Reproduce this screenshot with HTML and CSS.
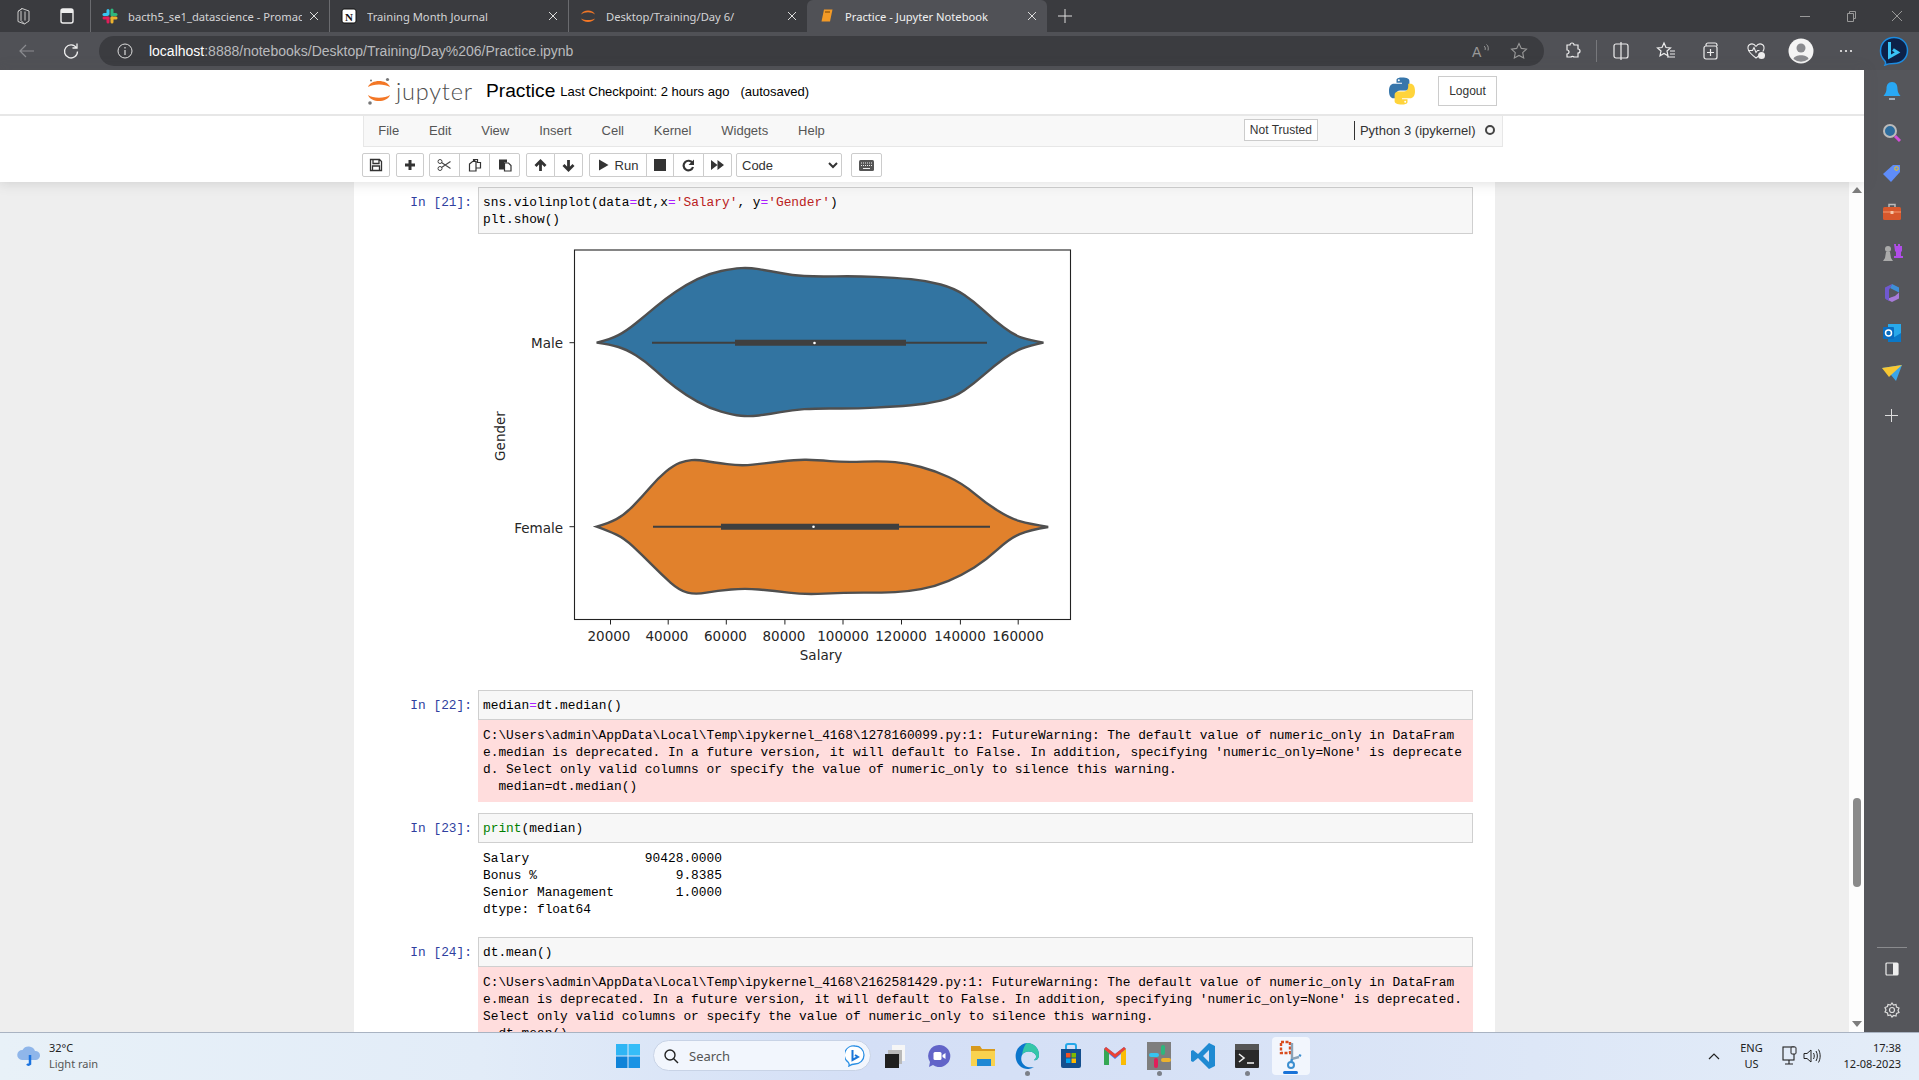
FILE: index.html
```html
<!DOCTYPE html>
<html>
<head>
    <title>Practice - Jupyter Notebook</title>
    <meta charset="UTF-8">
    <link rel="stylesheet" href="styles.css">
</head>
<body>
    <!-- browser tabs -->
    <div class="tabstrip">
        <div class="strip-icons">
            <svg class="ico" width="20" height="20" viewBox="0 0 20 20"><path d="M8 2.500l7 2.500v10l-4.500 3-6.500-2.500v-10zM8 2.500l-4 3M7 5v9.500l3.500 3.500M11 5.500v9" fill="none" stroke="#ccc" stroke-width="1"/></svg>
            <svg class="ico" width="20" height="20" viewBox="0 0 20 20"><rect x="4" y="3" width="12" height="14" rx="2" fill="none" stroke="#eee" stroke-width="1.400"/><rect x="4" y="3" width="12" height="4" fill="#eee"/></svg>
        </div>
        <div class="tab">
            <svg class="tab-ico" width="16" height="16" viewBox="0 0 16 16"><g fill="none" stroke-width="3" stroke-linecap="round"><path d="M6 2.500v3.500" stroke="#36c5f0"/><path d="M2 6.500h3" stroke="#36c5f0"/><path d="M10 2v5" stroke="#2eb67d"/><path d="M11 6.500h3" stroke="#2eb67d"/><path d="M10 10v4" stroke="#ecb22e"/><path d="M10 10h4" stroke="#ecb22e"/><path d="M6 10v4" stroke="#e01e5a"/><path d="M2 10h4" stroke="#e01e5a"/></g></svg>
            <span class="tab-title">bacth5_se1_datascience - Promact</span>
            <svg class="tab-x" width="10" height="10" viewBox="0 0 10 10"><path d="M1 1l8 8M9 1l-8 8"/></svg>
        </div>
        <div class="tab">
            <svg class="tab-ico" width="16" height="16" viewBox="0 0 16 16"><rect x="1" y="1" width="14" height="14" rx="2" fill="#fff" stroke="#111"/><text x="8" y="12.500" class="notion-n">N</text></svg>
            <span class="tab-title">Training Month Journal</span>
            <svg class="tab-x" width="10" height="10" viewBox="0 0 10 10"><path d="M1 1l8 8M9 1l-8 8"/></svg>
        </div>
        <div class="tab">
            <svg class="tab-ico" width="16" height="16" viewBox="0 0 16 16"><path d="M1 6.500C3 1 13 1 15 6.500 11 3.500 5 3.500 1 6.500zM1 10.500C3 15 13 15 15 10.500 11 12.500 5 12.500 1 10.500z" fill="#f37726"/></svg>
            <span class="tab-title">Desktop/Training/Day 6/</span>
            <svg class="tab-x" width="10" height="10" viewBox="0 0 10 10"><path d="M1 1l8 8M9 1l-8 8"/></svg>
        </div>
        <div class="tab active">
            <svg class="tab-ico" width="16" height="16" viewBox="0 0 16 16"><path d="M5 1.500h8.500l-2.500 12H2.500z" fill="#f39a26"/><path d="M6 4h5" stroke="#7a4400"/></svg>
            <span class="tab-title">Practice - Jupyter Notebook</span>
            <svg class="tab-x" width="10" height="10" viewBox="0 0 10 10"><path d="M1 1l8 8M9 1l-8 8"/></svg>
        </div>
        <svg class="new-tab" width="14" height="14" viewBox="0 0 14 14"><path d="M7 0v14M0 7h14" stroke="#ddd"/></svg>
        <div class="winctl">
            <svg width="12" height="12" viewBox="0 0 12 12"><path d="M1 6.500h10" stroke="#999"/></svg>
            <svg width="12" height="12" viewBox="0 0 12 12"><path d="M2.500 3.500h6v8h-6zM4.500 3.500v-2h6v7h-2" fill="none" stroke="#999"/></svg>
            <svg width="12" height="12" viewBox="0 0 12 12"><path d="M1 1l10 10M11 1l-10 10" stroke="#999"/></svg>
        </div>
    </div>

    <!-- address bar -->
    <div class="addrbar">
        <div class="nav-btn"><svg width="18" height="18" viewBox="0 0 18 18"><path d="M16 9H2M8 3L2 9l6 6" fill="none" stroke="#8b8c90" stroke-width="1.200"/></svg></div>
        <div class="nav-btn"><svg width="18" height="18" viewBox="0 0 18 18"><path d="M14.500 6A6.500 6.500 0 1 0 15.500 9.500M15 1.500V6h-4.500" fill="none" stroke="#eee" stroke-width="1.300"/></svg></div>
        <div class="addr-pill">
            <svg width="16" height="16" viewBox="0 0 16 16"><circle cx="8" cy="8" r="7" fill="none" stroke="#ddd"/><path d="M8 7v5M8 4v1.500" stroke="#ddd" stroke-width="1.200"/></svg>
            <span class="url"><b>localhost</b>:8888/notebooks/Desktop/Training/Day%206/Practice.ipynb</span>
            <svg class="addr-right" width="20" height="18" viewBox="0 0 20 18"><text x="1" y="15" class="read-a">A</text><path d="M13 4c1.500 1 1.500 3 1 4M15.500 2.500c2 1.500 2 4 1.500 6" fill="none" stroke="#999"/></svg>
            <svg class="addr-star" width="18" height="18" viewBox="0 0 18 18"><path d="M9 1.500l2.300 4.900 5.200.7-3.800 3.600 1 5.300L9 13.400 4.300 16l1-5.300L1.500 7.100l5.200-.7z" fill="none" stroke="#999" stroke-width="1.100"/></svg>
        </div>
        <div class="tool-btn"><svg width="20" height="20" viewBox="0 0 20 20"><path d="M7 4a2 2 0 0 1 4 0h4v4a2 2 0 0 1 0 4v4h-4a2 2 0 0 0-3 0H4v-3a2 2 0 0 0 0-4V4z" fill="none" stroke="#eee" stroke-width="1.200"/></svg></div>
        <div class="tool-sep"></div>
        <div class="tool-btn"><svg width="20" height="20" viewBox="0 0 20 20"><rect x="3" y="3" width="14" height="14" rx="2" fill="none" stroke="#eee" stroke-width="1.200"/><path d="M10 1v18" stroke="#eee" stroke-width="1.200"/></svg></div>
        <div class="tool-btn"><svg width="20" height="20" viewBox="0 0 20 20"><path d="M8 2l2 4.500 4.500.5-3.500 3 1 4.700L8 12.400 4 14.700l1-4.700-3.500-3L6 6.500zM14 10h5M14 13h5M11 16h8" fill="none" stroke="#eee" stroke-width="1.200"/></svg></div>
        <div class="tool-btn"><svg width="20" height="20" viewBox="0 0 20 20"><path d="M5 4.500V4a2 2 0 0 1 2-2h7a2 2 0 0 1 2 2v1M3 7a2 2 0 0 1 2-2h9a2 2 0 0 1 2 2v9a2 2 0 0 1-2 2H5a2 2 0 0 1-2-2zM9.500 8v7M6 11.500h7" fill="none" stroke="#eee" stroke-width="1.200"/></svg></div>
        <div class="tool-btn"><svg width="20" height="20" viewBox="0 0 20 20"><path d="M10 5.500C7 1 1.500 3 2 7.500c.3 3 4 6.500 8 9.500 1-.7 1.800-1.400 2.600-2M10 5.500C13 1 18.500 3 18 7.500c-.1 1-.5 2-1.200 3M2 9.500h4.500l1.500-3 2 5 1.500-2h2" fill="none" stroke="#eee" stroke-width="1.100"/><circle cx="15.500" cy="14.500" r="3.500" fill="#eee"/></svg></div>
        <div class="tool-btn"><svg width="26" height="26" viewBox="0 0 26 26"><circle cx="13" cy="13" r="12.500" fill="#f4f4f4"/><circle cx="13" cy="10" r="4.500" fill="#8a8b8f"/><path d="M5.500 21c1-5 14-5 15 0a12 12 0 0 1-15 0z" fill="#8a8b8f"/></svg></div>
        <div class="tool-btn"><svg width="16" height="6" viewBox="0 0 16 6"><circle cx="3" cy="3" r="1.100" fill="#eee"/><circle cx="8" cy="3" r="1.100" fill="#eee"/><circle cx="13" cy="3" r="1.100" fill="#eee"/></svg></div>
        <div class="bing-btn"><svg width="30" height="30" viewBox="0 0 30 30"><path d="M15 1.500c8 0 13.500 5.500 13.500 13 0 7.500-5.500 13-13.500 13-3 0-6 0-9 1.500 1-2 .5-3.500-.5-4.500C3 22 1.500 19 1.500 15 1.500 7 7 1.500 15 1.500z" fill="#0d2148" stroke="#1c8be0" stroke-width="1.500"/><path d="M10.500 6v15l8-4.500-4.500-3" fill="none" stroke="#39c3f5" stroke-width="3"/></svg></div>
    </div>

    <div class="workarea">
        <div class="page">
            <div class="nb-header">
                <div class="header-row">
                    <svg class="jp-mark" width="26" height="28" viewBox="0 0 26 28"><path d="M2 10C5 2 21 2 24 10 19 6.500 7 6.500 2 10zM2 18C5 26 21 26 24 18 19 21.500 7 21.500 2 18z" fill="#f37726"/><circle cx="21.500" cy="2.500" r="1.600" fill="#767677"/><circle cx="5" cy="3.500" r="1" fill="#767677"/><circle cx="4" cy="26" r="1.800" fill="#767677"/></svg>
                    <span class="jp-word">jupyter</span>
                    <span class="nb-name">Practice</span>
                    <span class="checkpoint">Last Checkpoint: 2 hours ago</span>
                    <span class="autosave">(autosaved)</span>
                    <svg class="py-logo" width="28" height="28" viewBox="0 0 28 28"><path d="M13.800.5C8.200.5 8.500 3 8.500 3v2.800H14v.9H6C3 6.700 1 9 1 14s2 7.300 4.500 7.300h2.300V18c0-2.500 2-4.500 4.400-4.500h5.600c2 0 3.600-1.500 3.600-3.500V4c0-2-2-3.500-7.600-3.500z" fill="#3776ab"/><path d="M14.200 27.500c5.600 0 5.300-2.500 5.300-2.500v-2.800H14v-.9h8c3 0 5-2.300 5-7.300s-2-7.300-4.500-7.300h-2.300V10c0 2.500-2 4.500-4.400 4.500h-5.600c-2 0-3.600 1.500-3.600 3.500v6c0 2 2 3.500 7.600 3.500z" fill="#ffd43b"/><circle cx="10.800" cy="3.300" r="1" fill="#fff"/><circle cx="17.200" cy="24.700" r="1" fill="#fff"/></svg>
                    <div class="logout">Logout</div>
                </div>
                <div class="menubar">
                    <span class="menu-item">File</span>
                    <span class="menu-item">Edit</span>
                    <span class="menu-item">View</span>
                    <span class="menu-item">Insert</span>
                    <span class="menu-item">Cell</span>
                    <span class="menu-item">Kernel</span>
                    <span class="menu-item">Widgets</span>
                    <span class="menu-item">Help</span>
                    <span class="not-trusted">Not Trusted</span>
                    <span class="kernel-name">Python 3 (ipykernel)</span>
                    <span class="kernel-dot"></span>
                </div>
                <div class="toolbar">
                    <div class="btn w28"><svg width="14" height="14" viewBox="0 0 14 14"><path d="M1.500 1.500h9l2 2v9h-11zM4 1.500v4h6v-4M3.500 12.500V8h7v4.500" fill="none" stroke="#333" stroke-width="1.300"/></svg></div>
                    <div class="btn w28 gap-s"><svg width="14" height="14" viewBox="0 0 14 14"><path d="M7 2v10M2 7h10" stroke="#333" stroke-width="3"/></svg></div>
                    <div class="btn-group gap-xs">
                        <div class="btn w30"><svg width="15" height="14" viewBox="0 0 15 14"><circle cx="3" cy="3.500" r="2" fill="none" stroke="#444"/><circle cx="3" cy="10.500" r="2" fill="none" stroke="#444"/><path d="M4.500 4.500l9 6M4.500 9.500l9-6" stroke="#444" stroke-width="1.100"/></svg></div>
                        <div class="btn w30"><svg width="14" height="14" viewBox="0 0 14 14"><path d="M5.500 3.500V1.500h4v3h3V10h-4M8.500 4.500L5.500 1.500M1.500 6l3-2.500h3.500V13h-6.500z" fill="none" stroke="#333" stroke-width="1.200"/></svg></div>
                        <div class="btn w30"><svg width="14" height="14" viewBox="0 0 14 14"><path d="M1 1.500h8v3H6v7H1z" fill="#333"/><path d="M6.500 5h4l2.500 2.500V13H6.500z" fill="none" stroke="#333" stroke-width="1.200"/></svg></div>
                    </div>
                    <div class="btn-group gap-s">
                        <div class="btn w29"><svg width="13" height="13" viewBox="0 0 13 13"><path d="M6.500 12V2M1.500 7l5-5 5 5" fill="none" stroke="#333" stroke-width="2.800"/></svg></div>
                        <div class="btn w29"><svg width="13" height="13" viewBox="0 0 13 13"><path d="M6.500 1v10M1.500 6l5 5 5-5" fill="none" stroke="#333" stroke-width="2.800"/></svg></div>
                    </div>
                    <div class="btn-group gap-s">
                        <div class="btn run"><svg width="11" height="12" viewBox="0 0 11 12"><path d="M1 .5L10.500 6 1 11.500z" fill="#333"/></svg><span>Run</span></div>
                        <div class="btn w28"><svg width="12" height="12" viewBox="0 0 12 12"><rect width="12" height="12" fill="#333"/></svg></div>
                        <div class="btn w30"><svg width="13" height="13" viewBox="0 0 13 13"><path d="M10.500 4A4.800 4.800 0 1 0 11 8" fill="none" stroke="#333" stroke-width="2.200"/><path d="M12 .5V6H6.500z" fill="#333"/></svg></div>
                        <div class="btn w29"><svg width="13" height="12" viewBox="0 0 13 12"><path d="M0 1l6.500 5L0 11zM6.500 1L13 6l-6.500 5z" fill="#333"/></svg></div>
                    </div>
                    <select class="cell-type"><option>Code</option></select>
                    <div class="btn kb"><svg width="15" height="11" viewBox="0 0 15 11"><rect width="15" height="11" rx="1.500" fill="#555"/><path d="M2 3h11M2 5.500h11" stroke="#eee" stroke-dasharray="1 1"/><path d="M4 8.500h7" stroke="#eee"/></svg></div>
                </div>
            </div>

            <div class="nb-body">
                <div class="site">
                    <div class="notebook">
                        <div class="cell">
                            <div class="prompt">In&nbsp;[21]:</div>
                            <div class="cell-main">
<pre class="input">sns.violinplot(data<span class="op">=</span>dt,x<span class="op">=</span><span class="str">'Salary'</span>, y<span class="op">=</span><span class="str">'Gender'</span>)
plt.show()</pre>
                                <svg class="plot" width="620" height="436" viewBox="0 4 620 436">
                                    <g transform="scale(.3954 .3333)">
                                        <path class="violin" fill="#3274a1" d="M295 338Q330 328 350 315.500Q370 303 395 279Q420 255 445 230Q470 205 495 185Q520 165 550 147.500Q580 130 610 123Q640 116 660 114.500Q680 113 705 117.500Q730 122 760 129Q790 136 820 138Q850 140 900 139Q950 138 1000 140.500Q1050 143 1090 147.500Q1130 152 1165 163.500Q1200 175 1225 195Q1250 215 1275 242.500Q1300 270 1325 292.500Q1350 315 1370 323Q1390 331 1425 338Q1390 347 1370 356Q1350 365 1325 386.500Q1300 408 1275 434Q1250 460 1225 481Q1200 502 1165 512Q1130 522 1090 526Q1050 530 1000 533Q950 536 900 535.500Q850 535 820 537.500Q790 540 760 546.500Q730 553 705 556.500Q680 560 660 557.500Q640 555 610 545Q580 535 550 515Q520 495 495 472.500Q470 450 445 422.500Q420 395 395 376.500Q370 358 350 351Q330 344 295 338Z"/>
                                        <path class="violin" fill="#e1812c" d="M295 890Q325 880 345 867.500Q365 855 387.500 827.500Q410 800 430 772.500Q450 745 470 725Q490 705 505 698.500Q520 692 535 690.500Q550 689 570 693Q590 697 625 702.500Q660 708 690 704Q720 700 760 694.500Q800 689 825 689.500Q850 690 885 693.500Q920 697 970 695Q1020 693 1050 696.500Q1080 700 1115 711Q1150 722 1185 741Q1220 760 1250 790Q1280 820 1310 842.500Q1340 865 1365 873.500Q1390 882 1437 891Q1390 900 1365 912.500Q1340 925 1310 957.500Q1280 990 1250 1012.500Q1220 1035 1185 1052.500Q1150 1070 1115 1077.500Q1080 1085 1050 1086.500Q1020 1088 970 1088Q920 1088 870 1091Q820 1094 780 1088Q740 1082 705 1078.500Q670 1075 635 1078.500Q600 1082 572.500 1088Q545 1094 525 1088Q505 1082 482.500 1058.500Q460 1035 435 1005Q410 975 387.500 950Q365 925 345 914Q325 903 295 890Z"/>
                                    </g>
                                    <path class="whisker" d="M172 112.700H507M173 296.700H510"/>
                                    <path class="box" d="M255 112.700H426M241 296.700H419"/>
                                    <circle class="median" cx="334.500" cy="113" r="1.300"/>
                                    <circle class="median" cx="333.500" cy="296.700" r="1.300"/>
                                    <rect class="frame" x="94.500" y="20" width="496" height="369.500"/>
                                    <path class="tick" d="M130.500 389.500v5M188.200 389.500v5M246.300 389.500v5M304.900 389.500v5M363 389.500v5M421.500 389.500v5M480.400 389.500v5M538.200 389.500v5M94.500 112.700h-5M94.500 296.700h-5"/>
                                    <text class="lbl mid" x="129" y="410.500">20000</text>
                                    <text class="lbl mid" x="187" y="410.500">40000</text>
                                    <text class="lbl mid" x="245.500" y="410.500">60000</text>
                                    <text class="lbl mid" x="304" y="410.500">80000</text>
                                    <text class="lbl mid" x="363" y="410.500">100000</text>
                                    <text class="lbl mid" x="421" y="410.500">120000</text>
                                    <text class="lbl mid" x="480" y="410.500">140000</text>
                                    <text class="lbl mid" x="538" y="410.500">160000</text>
                                    <text class="lbl mid" x="341" y="430">Salary</text>
                                    <text class="lbl end" x="83" y="118">Male</text>
                                    <text class="lbl end" x="83" y="303">Female</text>
                                    <text class="lbl mid" transform="translate(25 206) rotate(-90)">Gender</text>
                                </svg>
                            </div>
                        </div>

                        <div class="cell">
                            <div class="prompt">In&nbsp;[22]:</div>
                            <div class="cell-main">
                                <pre class="input">median<span class="op">=</span>dt.median()</pre>
<pre class="stderr">C:\Users\admin\AppData\Local\Temp\ipykernel_4168\1278160099.py:1: FutureWarning: The default value of numeric_only in DataFram
e.median is deprecated. In a future version, it will default to False. In addition, specifying 'numeric_only=None' is deprecate
d. Select only valid columns or specify the value of numeric_only to silence this warning.
  median=dt.median()</pre>
                            </div>
                        </div>

                        <div class="cell">
                            <div class="prompt">In&nbsp;[23]:</div>
                            <div class="cell-main">
                                <pre class="input"><span class="kw">print</span>(median)</pre>
<pre class="stdout">Salary               90428.0000
Bonus %                  9.8385
Senior Management        1.0000
dtype: float64</pre>
                            </div>
                        </div>

                        <div class="cell">
                            <div class="prompt">In&nbsp;[24]:</div>
                            <div class="cell-main">
                                <pre class="input">dt.mean()</pre>
<pre class="stderr">C:\Users\admin\AppData\Local\Temp\ipykernel_4168\2162581429.py:1: FutureWarning: The default value of numeric_only in DataFram
e.mean is deprecated. In a future version, it will default to False. In addition, specifying 'numeric_only=None' is deprecated.
Select only valid columns or specify the value of numeric_only to silence this warning.
  dt.mean()</pre>
                            </div>
                        </div>
                    </div>
                </div>
                <div class="scrollbar">
                    <div class="arrow-up"></div>
                    <div class="thumb"></div>
                    <div class="arrow-down"></div>
                </div>
            </div>
        </div>

        <!-- edge sidebar -->
        <div class="sidebar">
            <svg width="20" height="22" viewBox="0 0 20 22"><path d="M10 1c4 0 5.500 3 5.500 7 0 3 1.500 5 3 7H1.500c1.500-2 3-4 3-7 0-4 1.500-7 5.500-7z" fill="#29a8f4"/><path d="M7 18h6" stroke="#bcd" stroke-width="1.500"/></svg>
            <svg width="20" height="20" viewBox="0 0 20 20"><circle cx="8" cy="8" r="6" fill="#2d6d9e" stroke="#bbb" stroke-width="2"/><path d="M13 13l5 5" stroke="#d34fd8" stroke-width="3"/></svg>
            <svg width="20" height="20" viewBox="0 0 20 20"><path d="M1 11L11 2h7v7l-9 10z" fill="#5f8dfa"/><circle cx="14.500" cy="5.500" r="1.800" fill="#5f8dfa" stroke="#fc0"/></svg>
            <svg width="20" height="18" viewBox="0 0 20 18"><path d="M7 4V1.500h6V4" fill="none" stroke="#bbb" stroke-width="1.500"/><rect x="1" y="4" width="18" height="13" rx="1.500" fill="#d8582c"/><path d="M1 9h18" stroke="#f29a70"/><rect x="8.500" y="8" width="3" height="3" fill="#f6c7a8"/></svg>
            <svg width="22" height="22" viewBox="0 0 22 22"><path d="M13 3h2v2h2V3h2v2h2v-2v7l-1 1v4h2v2h-9v-2h2v-4l-1-1z" fill="#b04de8"/><circle cx="7" cy="8" r="3" fill="#aaa"/><path d="M5 11h4l1 6 2 3H2l2-3z" fill="#aaa"/></svg>
            <svg width="20" height="20" viewBox="0 0 20 20"><path d="M10 1l7 3.500v5L8 5z" fill="#3e8ed8"/><path d="M17 9.500v6L10 19l-6-3 9-3z" fill="#a77ad8"/><path d="M10 1L3 4.500v11L7 18V7z" fill="#6f58d0"/><path d="M7 7l7 4-7 4z" fill="#55565b"/></svg>
            <svg width="20" height="20" viewBox="0 0 20 20"><rect x="6" y="1" width="13" height="18" fill="#28a8ea"/><path d="M6 11l6.500 3L19 10v9H6z" fill="#0a78c8"/><rect x="1" y="4" width="11" height="12" rx="1" fill="#0a6cc0"/><circle cx="6.500" cy="10" r="3" fill="none" stroke="#fff" stroke-width="1.500"/></svg>
            <svg class="side-send" width="20" height="16" viewBox="0 0 20 16"><path d="M0 3l20-3-6 16-5-6z" fill="#3ba5e8"/><path d="M0 3l20-3-11 10-2 2z" fill="#f7c733"/></svg>
            <svg class="side-plus" width="13" height="13" viewBox="0 0 13 13"><path d="M6.500 0v13M0 6.500h13" stroke="#ddd"/></svg>
            <div class="side-rule"></div>
            <svg class="side-panel" width="16" height="16" viewBox="0 0 16 16"><rect x="2" y="2" width="12" height="12" rx="1" fill="none" stroke="#eee" stroke-width="1.200"/><rect x="9" y="2" width="5" height="12" fill="#eee"/></svg>
            <svg class="side-gear" width="18" height="18" viewBox="0 0 18 18"><circle cx="9" cy="9" r="2.500" fill="none" stroke="#ddd" stroke-width="1.200"/><path d="M9 2l1.500 2 2.500-.5.500 2.500 2.500 1-1 2.500 1 2-2.500 1-.5 2.500-2.500-.5L9 16l-1.500-2-2.500.5-.5-2.500-2.500-1 1-2-1-2.500 2.500-1L5 3.500l2.500.5z" fill="none" stroke="#ddd" stroke-width="1.200"/></svg>
        </div>
    </div>

    <!-- windows taskbar -->
    <div class="taskbar">
        <div class="weather">
            <svg width="26" height="26" viewBox="0 0 26 26"><path d="M6 17a5 5 0 0 1 .5-10A7 7 0 0 1 19 8a4.500 4.500 0 0 1 1 9z" fill="#8fb6ea"/><path d="M14 12v9a2 2 0 0 1-3 0" fill="none" stroke="#1a73e0" stroke-width="2.500"/></svg>
            <div class="weather-text">
                <span>32°C</span>
                <span class="weather-sub">Light rain</span>
            </div>
        </div>
        <div class="task-btn start"><svg width="24" height="24" viewBox="0 0 24 24"><path d="M0 0h11.500v11.500H0z" fill="#2fb5f4"/><path d="M12.500 0H24v11.500H12.500z" fill="#36bdf8"/><path d="M0 12.500h11.500V24H0z" fill="#0f83d8"/><path d="M12.500 12.500H24V24H12.500z" fill="#1a93e4"/></svg></div>
        <div class="search-pill">
            <svg width="16" height="16" viewBox="0 0 16 16"><circle cx="7" cy="7" r="5" fill="none" stroke="#222" stroke-width="1.400"/><path d="M10.500 10.500L15 15" stroke="#222" stroke-width="1.400"/></svg>
            <span class="search-text">Search</span>
            <svg class="search-bing" width="20" height="22" viewBox="0 0 20 22"><path d="M10 1c5 0 9 4 9 9s-4 9-9 9c-2 0-4 .5-6 2 .5-2 0-3-1-4a9 9 0 0 1 7-16z" fill="#fff" stroke="#2a8fe4" stroke-width="1.300"/><path d="M7.500 5v10l5.500-3-3-2" fill="none" stroke="#1b76d8" stroke-width="2"/></svg>
        </div>
        <div class="task-btn"><svg width="24" height="24" viewBox="0 0 24 24"><rect x="9" y="1" width="13" height="16" fill="#f6f6f6"/><rect x="5" y="6" width="14" height="14" fill="#b9b9b9"/><rect x="2" y="10" width="14" height="14" fill="#1f1f1f"/></svg></div>
        <div class="task-btn"><svg width="24" height="24" viewBox="0 0 24 24"><path d="M12 1a11 11 0 1 1-6 20l-4 2 1-5A11 11 0 0 1 12 1z" fill="#6264c8"/><rect x="6.500" y="8" width="8" height="8" rx="1.500" fill="#fff"/><path d="M15.500 11l3-2v6l-3-2z" fill="#fff"/></svg></div>
        <div class="task-btn"><svg width="24" height="24" viewBox="0 0 24 24"><path d="M0 2h9l2 3h13v4H0z" fill="#d89a1e"/><path d="M0 7h24v15H0z" fill="#f9d24e"/><rect x="6" y="15" width="14" height="7" fill="#1e88d4"/></svg></div>
        <div class="task-btn dot"><svg width="26" height="28" viewBox="0 0 26 28"><path d="M13 1a12 13 0 1 0 7 24C11 27 5 20 8 13c2-4 9-5 13-1 2 2 1 5-1 6 3 1 5-2 5-5C25 6 20 1 13 1z" fill="#0c76cc"/><path d="M13 1C20 1 25 6 25 13c0 3-2 6-5 5 2-1 3-4 1-6-4-4-11-3-13 1 1-6 3-11 5-12z" fill="#35c7a8"/></svg></div>
        <div class="task-btn"><svg width="24" height="26" viewBox="0 0 24 26"><path d="M7 6V3a2 2 0 0 1 2-2h6a2 2 0 0 1 2 2v3" fill="none" stroke="#25a7e8" stroke-width="2"/><path d="M2 6h20v17a2 2 0 0 1-2 2H4a2 2 0 0 1-2-2z" fill="#144f8e"/><rect x="7" y="10" width="4.500" height="4.500" fill="#f25022"/><rect x="12.500" y="10" width="4.500" height="4.500" fill="#7fba00"/><rect x="7" y="15.500" width="4.500" height="4.500" fill="#00a4ef"/><rect x="12.500" y="15.500" width="4.500" height="4.500" fill="#ffb900"/></svg></div>
        <div class="task-btn"><svg width="24" height="20" viewBox="0 0 24 20"><path d="M1 3v16h5V8l6 5 6-5v11h5V3l-2-2-9 7-9-7z" fill="#4285f4"/><path d="M1 3l5 4v12H2a1 1 0 0 1-1-1z" fill="#34a853"/><path d="M3 1l9 7 9-7 2 2-11 9L1 3z" fill="#ea4335"/><path d="M18 7l5-4v15a1 1 0 0 1-1 1h-4z" fill="#fbbc04"/></svg></div>
        <div class="task-btn dot"><svg width="24" height="28" viewBox="0 0 24 28"><rect width="24" height="28" fill="#7e7e7e"/><rect x="2" y="11" width="10" height="4" rx="2" fill="#36c5f0"/><rect x="14" y="3" width="4" height="10" rx="2" fill="#2eb67d"/><rect x="14" y="16" width="10" height="4" rx="2" fill="#ecb22e"/><rect x="7" y="16" width="4" height="10" rx="2" fill="#e01e5a"/></svg></div>
        <div class="task-btn"><svg width="26" height="28" viewBox="0 0 26 28"><path d="M19 1l6 3v20l-6 3L8 16l-5 4-2-1V9l2-1 5 4zM19 8l-6 6 6 6z" fill="#1f8ad2" fill-rule="evenodd"/></svg></div>
        <div class="task-btn dot"><svg width="24" height="24" viewBox="0 0 24 24"><rect width="24" height="24" rx="1" fill="#2a2a2a"/><rect width="24" height="6" fill="#555"/><path d="M4 10l5 4-5 4" fill="none" stroke="#eee" stroke-width="1.600"/><path d="M12 19h7" stroke="#eee" stroke-width="1.600"/></svg></div>
        <div class="task-btn active-app"><svg width="26" height="32" viewBox="0 0 26 32"><path d="M3 2h9v11H3z" fill="none" stroke="#d94d1f" stroke-width="2.400" stroke-dasharray="3 1.500"/><path d="M14 3v16l7-2" fill="none" stroke="#8ba3b8" stroke-width="2.400"/><circle cx="13" cy="25" r="3" fill="none" stroke="#3d8fd0" stroke-width="2"/><path d="M14 19l-1 4M21 15l2 1" stroke="#3d8fd0" stroke-width="2.400"/></svg></div>
        <div class="tray">
            <svg class="tray-up" width="12" height="8" viewBox="0 0 12 8"><path d="M1 7l5-5 5 5" fill="none" stroke="#222" stroke-width="1.200"/></svg>
            <div class="tray-lang"><span>ENG</span><span>US</span></div>
            <svg width="18" height="20" viewBox="0 0 18 20"><rect x="1" y="1" width="11" height="13" fill="none" stroke="#222" stroke-width="1.100"/><rect x="9" y="1" width="5" height="7" rx="1" fill="#e7effa" stroke="#222"/><path d="M3 18h8M7 14v4" stroke="#222" stroke-width="1.100"/></svg>
            <svg class="tray-vol" width="18" height="18" viewBox="0 0 18 18"><path d="M1 6.500h3L8 3v12l-4-3.500H1z" fill="none" stroke="#222"/><path d="M10.500 6c1 2 1 4 0 6M13 4c1.800 3 1.800 7 0 10M15.500 2.500c2.200 4 2.200 9 0 13" fill="none" stroke="#222"/></svg>
            <div class="clock"><span>17:38</span><span>12-08-2023</span></div>
        </div>
    </div>
</body>
</html>
```

FILE: styles.css
```css
* { box-sizing: border-box; }
html, body { margin: 0; height: 1080px; overflow: hidden; }
body { display: flex; flex-direction: column; font-family: "Liberation Sans", Arial, sans-serif; background: #eee; }
svg { flex: none; display: block; }

/* tabs */
.tabstrip { height: 32px; background: #3a3b3f; display: flex; align-items: center; flex: none; }
.strip-icons { width: 90px; height: 32px; display: flex; align-items: center; gap: 23px; padding-left: 14px; }
.tab { width: 239px; height: 32px; display: flex; align-items: center; padding: 0 10px 0 11px; color: #d4d4d6; font: 11.200px "Noto Sans", sans-serif; border-left: 1px solid #6a6b6f; }
.tab-ico { margin: 0 10px 0 0; }
.notion-n { font: bold 11px "Liberation Serif", serif; text-anchor: middle; fill: #111; }
.tab-title { flex: 1; overflow: hidden; white-space: nowrap; }
.tab-x { stroke: #ddd; fill: none; margin-left: 7px; }
.tab.active { width: 240px; background: #505156; color: #f1f1f1; border-left: 0; border-radius: 6px 6px 0 0; padding-left: 12px; }
.new-tab { margin-left: 11px; }
.winctl { margin-left: auto; display: flex; gap: 34px; padding-right: 16px; }

/* address bar */
.addrbar { height: 38px; background: #505156; display: flex; align-items: center; padding-left: 5px; flex: none; }
.nav-btn { width: 44px; display: flex; justify-content: center; }
.addr-pill { width: 1446px; height: 30px; margin: 0 6px; background: #3b3c40; border-radius: 15px; display: flex; align-items: center; padding-left: 18px; }
.url { color: #b9babd; font: 14px "Liberation Sans", sans-serif; margin-left: 16px; }
.url b { color: #fff; font-weight: normal; }
.read-a { font: 14px "Liberation Sans", sans-serif; fill: #999; }
.addr-right { margin-left: auto; }
.addr-star { margin: 0 16px 0 19px; }
.tool-btn { width: 45px; display: flex; justify-content: center; }
.tool-sep { width: 1px; height: 22px; margin: 0 1px; background: #77787c; }
.bing-btn { width: 50px; margin-left: 1px; display: flex; justify-content: center; }

.workarea { flex: 1; display: flex; min-height: 0; }
.page { flex: 1; display: flex; flex-direction: column; min-width: 0; }

/* notebook header */
.nb-header { height: 112px; background: #fff; flex: none; box-shadow: 0 0 12px 1px rgba(87, 87, 87, .2); position: relative; z-index: 2; }
.header-row { height: 46px; border-bottom: 2px solid #e7e7e7; display: flex; align-items: center; padding: 0 0 2px 366px; }
.jp-word { font: 300 23.500px Lato, sans-serif; color: #4e4e4e; margin-left: 4px; letter-spacing: .8px; width: 90px; }
.nb-name { font-size: 19.200px; color: #000; margin-right: 5px; }
.checkpoint { font-size: 13px; color: #000; }
.autosave { font-size: 13px; color: #000; margin-left: 11px; }
.py-logo { margin-left: auto; }
.logout { width: 59px; height: 30px; margin: 0 367px 0 22px; border: 1px solid #ccc; font-size: 12px; color: #333; display: flex; align-items: center; justify-content: center; }

.menubar { width: 1140px; height: 31px; margin-left: 362.500px; background: #f8f8f8; border: 1px solid #e7e7e7; border-top: 0; display: flex; align-items: center; font-size: 13px; color: #555; padding: 0 7px 2px 0; }
.menu-item { padding: 0 14.700px; }
.menu-item + .menu-item { padding-left: 15.200px; }
.not-trusted { margin-left: auto; margin-right: -1px; width: 74px; height: 22px; border: 1px solid #ccc; background: #fff; font-size: 12px; color: #333; display: flex; align-items: center; justify-content: center; }
.kernel-name { margin-left: 37px; padding-left: 5px; border-left: 1px solid #333; color: #333; line-height: 19px; }
.kernel-dot { width: 10px; height: 10px; margin-left: 9px; border: 2px solid #444; border-radius: 50%; }

.toolbar { margin: 6px 0 0 362px; height: 24px; display: flex; }
.btn { height: 24px; background: #fff; border: 1px solid #ccc; border-radius: 2px; display: flex; align-items: center; justify-content: center; color: #333; font-size: 13px; }
.btn-group { display: flex; }
.btn-group .btn { border-radius: 0; margin-left: -1px; }
.btn-group .btn:first-child { margin-left: 0; border-radius: 2px 0 0 2px; }
.btn-group .btn:last-child { border-radius: 0 2px 2px 0; }
.w28 { width: 28px; }
.w29 { width: 29px; }
.w30 { width: 31px; }
.gap-s { margin-left: 6px; }
.gap-xs { margin-left: 5px; }
.run { width: 58px; gap: 6px; }
.cell-type { width: 106px; height: 24px; margin-left: 4px; background: #fff; border: 1px solid #ccc; border-radius: 2px; font: 13px "Liberation Sans", sans-serif; color: #333; padding-left: 1px; }
.kb { width: 31px; margin-left: 9px; }

/* notebook */
.nb-body { flex: 1; display: flex; min-height: 0; }
.site { flex: 1; overflow: hidden; background: #eee; padding-left: 354px; }
.notebook { width: 1141px; height: 100%; background: #fff; padding: 5px 22px 0 0; display: flex; flex-direction: column; gap: 11.500px; }
.cell { display: flex; flex: none; }
.prompt { width: 124px; padding: 7.250px 6px 0 0; text-align: right; font: 12.850px/17px "Liberation Mono", monospace; color: #303f9f; flex: none; }
.cell-main { flex: 1; min-width: 0; }
pre { margin: 0; font: 12.850px/17px "Liberation Mono", monospace; color: #000; white-space: pre; }
.input { background: #f7f7f7; border: 1px solid #cfcfcf; padding: 6.250px 4px 4.250px; }
.stderr { background: #fdd; padding: 7px 5px; overflow: hidden; }
.stdout { padding: 7.500px 5px; }
.str { color: #ba2121; }
.op { color: #aa22ff; }
.kw { color: #008000; }

/* chart */
.plot { margin: 0 0 9px 2px; }
.violin { stroke: #4f4f4f; stroke-width: 2.400; vector-effect: non-scaling-stroke; }
.whisker { stroke: #3f3f3f; stroke-width: 2; fill: none; }
.box { stroke: #3f3f3f; stroke-width: 6; fill: none; }
.median { fill: #fff; }
.frame { fill: none; stroke: #222; stroke-width: 1.100; }
.tick { stroke: #222; stroke-width: 1; fill: none; }
.lbl { font: 13.500px "DejaVu Sans", sans-serif; fill: #262626; }
.mid { text-anchor: middle; }
.end { text-anchor: end; }

/* page scrollbar */
.scrollbar { width: 15px; background: #fdfdfd; display: flex; flex-direction: column; align-items: center; padding: 5px 0; }
.arrow-up { width: 0; height: 0; border: 5px solid transparent; border-top: 0; border-bottom: 6px solid #7d7d7d; }
.arrow-down { width: 0; height: 0; border: 5px solid transparent; border-bottom: 0; border-top: 6px solid #7d7d7d; }
.thumb { width: 8px; height: 89px; margin: 605px 0 auto; background: #8a8a8a; border-radius: 4px; }

/* edge sidebar */
.sidebar { width: 55px; background: #55565b; display: flex; flex-direction: column; align-items: center; padding: 11px 0 13px; gap: 20px; flex: none; }
.side-send { margin-top: 2px; }
.side-plus { margin-top: 8px; }
.side-rule { width: 30px; height: 1px; background: #8a8b8e; margin: auto 0 -7px; }
.side-gear { margin-top: 4px; }

/* taskbar */
.taskbar { height: 48px; flex: none; display: flex; align-items: center; padding-bottom: 2px; border-top: 1px solid #a9b3c2; background: linear-gradient(90deg, #e8f1f8 0%, #e2ecf8 25%, #d4dff6 45%, #d6e1f6 60%, #e4edf8 100%); color: #222; font: 11px "Noto Sans", sans-serif; }
.weather { width: 605.500px; display: flex; align-items: center; padding-left: 16px; gap: 7px; flex: none; }
.weather-text { display: flex; flex-direction: column; line-height: 16px; }
.weather-sub { color: #555; }
.task-btn { width: 44px; height: 38px; display: flex; align-items: center; justify-content: center; position: relative; flex: none; }
.dot::after { content: ""; position: absolute; left: 20px; bottom: -1px; width: 5px; height: 5px; border-radius: 50%; background: #7c8088; }
.active-app { background: #f2f6fd; border-radius: 4px; width: 38px; margin-left: 3px; }
.active-app::after { content: ""; position: absolute; left: 11px; bottom: 1px; width: 15px; height: 3px; border-radius: 2px; background: #1a73d8; }
.search-pill { width: 218px; height: 31px; margin: 0 2px 0 3.500px; background: #f2f6fd; border: 1px solid #c8d3e6; border-radius: 16px; display: flex; align-items: center; padding: 0 5px 0 9px; flex: none; }
.search-text { font-size: 13px; color: #555; margin-left: 10px; }
.search-bing { margin-left: auto; }
.tray { margin-left: auto; display: flex; align-items: center; padding-right: 18px; }
.tray-up { margin-right: 17px; }
.tray-lang { width: 30px; text-align: center; display: flex; flex-direction: column; line-height: 16px; margin-right: 15px; }
.tray-vol { margin-left: 3.500px; }
.clock { width: 70px; margin-left: 10px; text-align: right; display: flex; flex-direction: column; line-height: 16px; }
```
